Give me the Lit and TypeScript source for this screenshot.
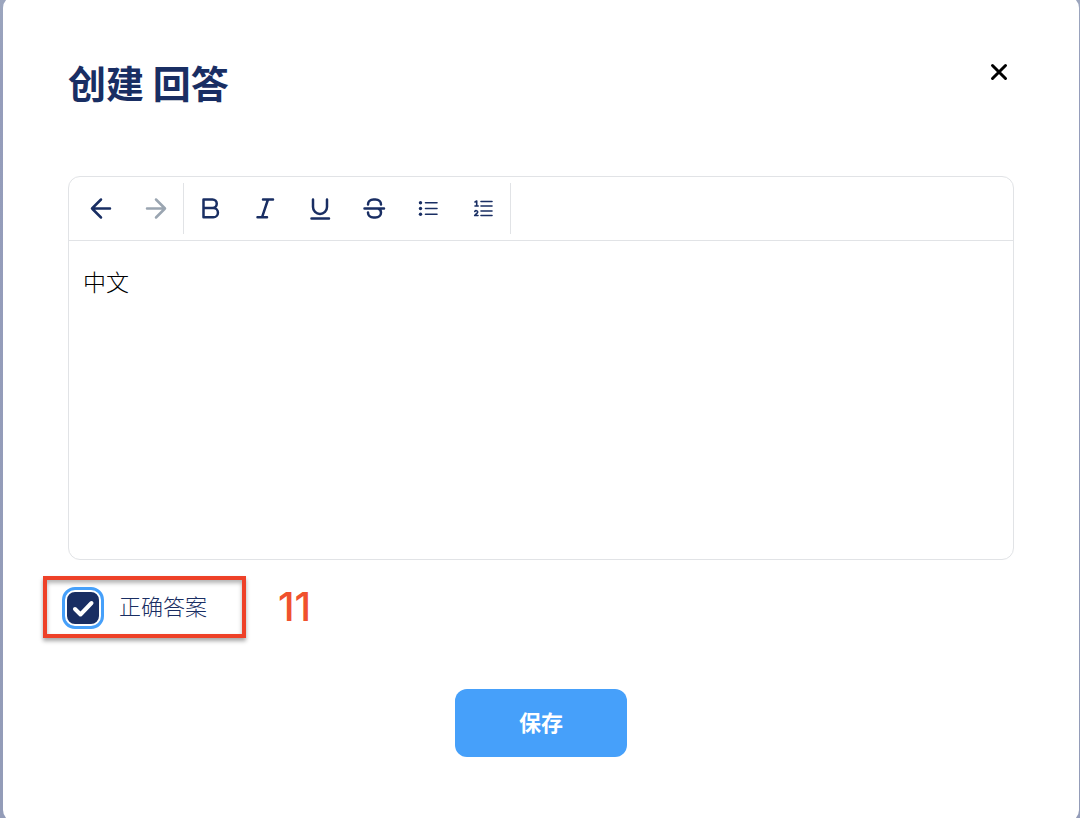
import { LitElement, html, css, svg } from "lit";
import { customElement, property, state } from "lit/decorators.js";

@customElement("tool-button")
export class ToolButton extends LitElement {
  @property() icon = "";
  @property() label = "";
  @property({ type: Boolean }) disabled = false;

  static styles = css`
    :host { display: flex; }
    button {
      flex: 1;
      display: flex;
      align-items: center;
      justify-content: center;
      padding: 0;
      border: 0;
      background: none;
      color: #192e63;
      cursor: pointer;
    }
    button:disabled { color: #9aa5b1; cursor: default; }
    svg {
      width: 26px;
      height: 26px;
      fill: none;
      stroke: currentColor;
      stroke-width: 2.5;
      stroke-linecap: round;
      stroke-linejoin: round;
    }
  `;

  private glyph() {
    switch (this.icon) {
      case "undo":
        return svg`<path d="M22 12.500H4M13 3.500l-9 9 9 9"/>`;
      case "redo":
        return svg`<path d="M4 12.500h18M13 3.500l9 9-9 9"/>`;
      case "bold":
        return svg`<path d="M5.500 3.500h9a4.200 4.200 0 0 1 0 8.500h-9zM5.500 12h9.800a4.600 4.600 0 0 1 0 9.300H5.500z"/>`;
      case "italic":
        return svg`<path d="M11 3.500h10M5.500 21.300h9.500M16 3.500l-6 17.800"/>`;
      case "underline":
        return svg`<path d="M6 3.500v7.500a7 7 0 0 0 14 0V3.500M4.500 22.500h17.500"/>`;
      case "strike":
        return svg`<path d="M7 8.500c0-3 2.200-5 5.500-5h2c3.300 0 5.500 2 5.500 5M7 16.500c0 3 2.200 5 5.500 5h2c3.300 0 5.500-2 5.500-4.700 0-2.300-1.200-3.800-3-4.300M3.500 12.500h19.500"/>`;
      case "bullets":
        return svg`<g stroke-width="1.600"><path d="M10.500 6.700h11.500M10.500 12.500h11.500M10.500 18.300h11.500"/><g fill="currentColor" stroke="none"><circle cx="5.500" cy="6.700" r="1.700"/><circle cx="5.500" cy="12.500" r="1.700"/><circle cx="5.500" cy="18.300" r="1.700"/></g></g>`;
      default:
        return svg`<g stroke-width="1.600"><path d="M11 5.500h11M11 10h11M11 15h11M11 19.500h11"/><path d="M5 6l1.700-1v5M5 10h3.200M4.800 15.500c.6-1.300 3-1 2.900.4 0 1.200-1.800 2-3 3.600h3.300"/></g>`;
    }
  }

  render() {
    return html`<button type="button" aria-label=${this.label} ?disabled=${this.disabled}>
      <svg viewBox="0 0 26 26" aria-hidden="true">${this.glyph()}</svg>
    </button>`;
  }
}

@customElement("app-root")
export class AppRoot extends LitElement {
  @state() private correct = true;

  static styles = css`
    :host {
      display: block;
      box-sizing: border-box;
      height: 100vh;
      overflow: hidden;
      padding: 0 1px 0 3px;
      background: linear-gradient(#9ca6be, #959dbb 80px, #939cb8);
      font-family: "Noto Sans CJK SC", sans-serif;
      color: #192e63;
    }
    * { box-sizing: border-box; }
    .dialog {
      height: calc(100% + 8px);
      margin: -4px 0;
      padding: 60px 65px;
      border-radius: 12px;
      background: #fff;
    }
    header {
      display: flex;
      justify-content: space-between;
      align-items: flex-start;
      margin-bottom: 68px;
    }
    h1 { margin: 0; font-size: 38px; line-height: 52px; font-weight: 700; }
    .close {
      display: flex;
      padding: 6px;
      margin: 1px 0 0;
      border: 0;
      background: none;
      cursor: pointer;
    }
    .close svg { width: 18px; height: 18px; stroke: #000; stroke-width: 3; stroke-linecap: round; }
    .editor { border: 1px solid #e1e3e6; border-radius: 12px; overflow: hidden; }
    .toolbar {
      display: flex;
      height: 64px;
      padding: 6px 5px;
      border-bottom: 1px solid #e1e3e6;
    }
    .group { display: grid; grid-auto-flow: column; grid-auto-columns: 1fr; border-right: 1px solid #e1e3e6; }
    .history { width: 110px; }
    .format { width: 327px; }
    textarea {
      display: block;
      width: 100%;
      height: 318px;
      padding: 24px 14px;
      border: 0;
      outline: 0;
      resize: none;
      background: none;
      color: #000;
      font: 300 23px/32px "Noto Sans CJK SC", sans-serif;
    }
    .answer { display: flex; align-items: center; gap: 32px; margin: 16px 0 0 -25px; }
    .marked {
      display: flex;
      align-items: center;
      gap: 20px;
      width: 203px;
      height: 62px;
      padding: 2px 0 0 20px;
      border: 4px solid #ee4128;
      box-shadow: 0 3px 4px rgba(0, 0, 0, 0.35), inset 0 3px 4px rgba(0, 0, 0, 0.3);
      font-size: 22px;
      font-weight: 300;
    }
    .marked label { padding-bottom: 6px; }
    .tick { display: grid; }
    .tick > * { grid-area: 1 / 1; }
    .tick input {
      appearance: none;
      width: 32px;
      height: 32px;
      margin: 0;
      border-radius: 8px;
      border: 2px solid #192e63;
      outline: 3px solid #46a0fa;
      outline-offset: 2px;
    }
    .tick input:checked { background: #192e63; }
    .tick svg {
      width: 32px;
      height: 32px;
      fill: none;
      stroke: #fff;
      stroke-width: 4;
      stroke-linejoin: round;
      stroke-linecap: round;
      pointer-events: none;
    }
    .tick input:not(:checked) + svg { visibility: hidden; }
    .step { font: 500 40px/44px Inter, sans-serif; color: #f0512d; }
    .save {
      display: block;
      width: 172px;
      height: 68px;
      margin: 51px auto 0;
      padding: 0 0 4px;
      border: 0;
      border-radius: 12px;
      background: #46a0fa;
      color: #fff;
      font: 700 22px/32px "Noto Sans CJK SC", sans-serif;
      cursor: pointer;
    }
  `;

  render() {
    return html`
      <section class="dialog" role="dialog" aria-labelledby="title">
        <header>
          <h1 id="title">创建 回答</h1>
          <button class="close" type="button" aria-label="关闭">
            <svg viewBox="0 0 18 18" aria-hidden="true"><path d="M2.500 2.500l13 13M15.500 2.500l-13 13" /></svg>
          </button>
        </header>
        <div class="editor">
          <div class="toolbar" role="toolbar">
            <div class="group history">
              <tool-button icon="undo" label="撤销"></tool-button>
              <tool-button icon="redo" label="重做" disabled></tool-button>
            </div>
            <div class="group format">
              <tool-button icon="bold" label="粗体"></tool-button>
              <tool-button icon="italic" label="斜体"></tool-button>
              <tool-button icon="underline" label="下划线"></tool-button>
              <tool-button icon="strike" label="删除线"></tool-button>
              <tool-button icon="bullets" label="项目列表"></tool-button>
              <tool-button icon="numbers" label="编号列表"></tool-button>
            </div>
          </div>
          <textarea aria-label="回答" .value=${"中文"}></textarea>
        </div>
        <div class="answer">
          <div class="marked">
            <span class="tick">
              <input
                id="correct"
                type="checkbox"
                .checked=${this.correct}
                @change=${(e: Event) => (this.correct = (e.target as HTMLInputElement).checked)}
              />
              <svg viewBox="0 0 32 32" aria-hidden="true"><path d="M8 17l5.500 5.500L24.500 11" /></svg>
            </span>
            <label for="correct">正确答案</label>
          </div>
          <span class="step">11</span>
        </div>
        <button class="save" type="button">保存</button>
      </section>
    `;
  }
}
